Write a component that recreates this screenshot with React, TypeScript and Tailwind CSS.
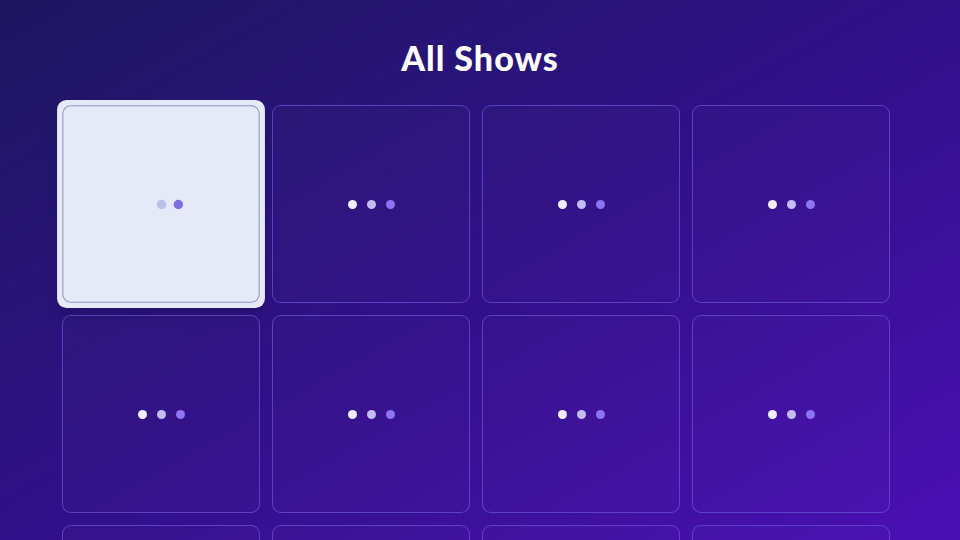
const shows = Array.from({ length: 12 }, (_, i) => i);

function Dots({ focused }: { focused: boolean }) {
  if (focused) {
    return (
      <div className="flex items-center gap-[7px]">
        <span className="h-[9px] w-[9px] rounded-full bg-transparent" />
        <span className="h-[9px] w-[9px] rounded-full bg-[#b9bfe9]" />
        <span className="h-[9px] w-[9px] rounded-full bg-[#7e6ee0]" />
      </div>
    );
  }
  return (
    <div className="flex items-center gap-[10px]">
      <span className="h-[9px] w-[9px] rounded-full bg-[#f1eeff]" />
      <span className="h-[9px] w-[9px] rounded-full bg-[#c3bdf6]" />
      <span className="h-[9px] w-[9px] rounded-full bg-[#8d74f3]" />
    </div>
  );
}

function ShowCard({ focused }: { focused: boolean }) {
  if (focused) {
    return (
      <div className="relative z-10 flex h-[198px] w-[198px] scale-105 items-center justify-center rounded-[9px] bg-[#e5e9f8] shadow-lg">
        <div className="absolute inset-[5px] rounded-[8px] border border-[#9493c6]" />
        <Dots focused />
      </div>
    );
  }
  return (
    <div className="flex h-[198px] w-[198px] items-center justify-center rounded-[9px] border border-[#6b55d6]/70 bg-white/[0.015]">
      <Dots focused={false} />
    </div>
  );
}

export default function App() {
  return (
    <div
      className="h-[540px] w-[960px] overflow-hidden bg-linear-to-br from-[#1d1660] via-[#301088] to-[#4a0fb4]"
      style={{ fontFamily: "Lato, 'Noto Sans', sans-serif" }}
    >
      <h1 className="pt-[35px] text-center text-[34px] font-black leading-[46px] tracking-[1px] text-white">
        All Shows
      </h1>
      <div className="grid grid-cols-[repeat(4,198px)] gap-[12px] pl-[62px] pt-[24px]">
        {shows.map((i) => (
          <ShowCard key={i} focused={i === 0} />
        ))}
      </div>
    </div>
  );
}
